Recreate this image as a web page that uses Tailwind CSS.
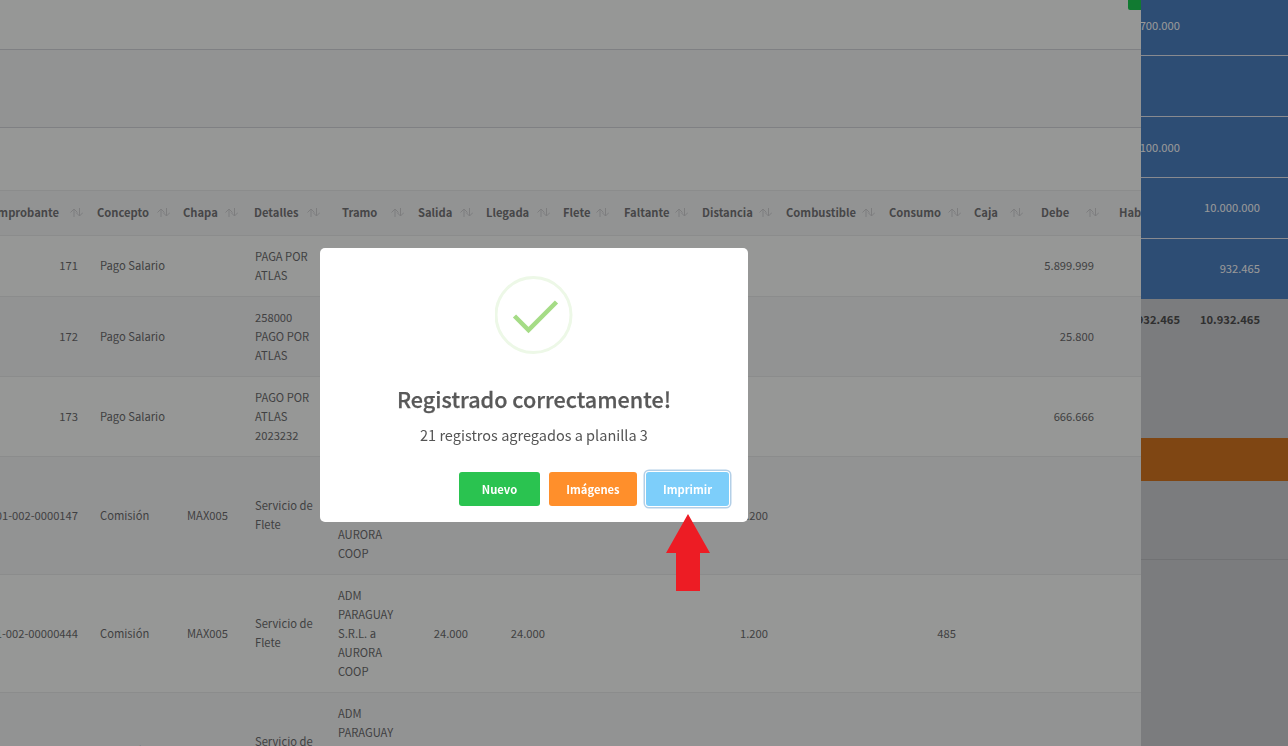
<!DOCTYPE html>
<html lang="es">
<head>
    <meta charset="UTF-8">
    <meta name="viewport" content="width=device-width, initial-scale=1.0">
    <title>Planilla</title>
    <script src="https://cdn.jsdelivr.net/npm/@tailwindcss/browser@4"></script>
</head>
<body class="h-screen overflow-hidden font-['Noto_Sans_CJK_SC','Noto_Sans',sans-serif] text-[11.2px] leading-[19px] text-[#6c6c6e]">
    <svg class="hidden">
        <symbol id="sort" viewBox="0 0 13 9">
            <path d="M4 9V1M.5 4.5L4 1L7.5 4.5M9.5 0V8M6 4.5L9.5 8L13 4.5" fill="none" stroke="currentColor" stroke-width="1"></path>
        </symbol>
    </svg>

    <div class="flex h-full">
        <!-- Tabla principal -->
        <div class="relative w-[1141px] shrink-0 overflow-hidden bg-[#f4f5f6]">
            <div class="absolute right-0 top-0 h-[10px] w-[13px] rounded-bl-[2px] bg-[#1dcb52]"></div>
            <div class="h-[50px] border-b border-[#d4d6da] bg-[#fafcfa]"></div>
            <div class="h-[78px] border-b border-[#d4d6da] bg-[#f4f5f6]"></div>
            <div class="h-[63px] border-b border-[#e8e9ea] bg-[#fafcfa]"></div>

            <table class="ml-[-27px] w-[1207px] table-fixed border-collapse">
                <colgroup>
                    <col class="w-[115px]"><col class="w-[89px]"><col class="w-[68px]"><col class="w-[83px]">
                    <col class="w-[80px]"><col class="w-[70px]"><col class="w-[77px]"><col class="w-[60px]">
                    <col class="w-[78px]"><col class="w-[85px]"><col class="w-[102px]"><col class="w-[86px]">
                    <col class="w-[65px]"><col class="w-[73px]"><col class="w-[76px]">
                </colgroup>
                <thead>
                    <tr class="h-[44px] border-b border-[#e8e9ea] bg-[#f4f5f6] text-left text-[#767678]">
                        <th class="pl-[10px] pr-[5px] font-bold"><div class="flex items-center justify-between">Comprobante<svg class="h-[9px] w-[13px] text-[#d0d1d3]"><use href="#sort"></use></svg></div></th>
                        <th class="pl-[9px] pr-[7px] font-bold"><div class="flex items-center justify-between">Concepto<svg class="h-[9px] w-[13px] text-[#d0d1d3]"><use href="#sort"></use></svg></div></th>
                        <th class="pl-[6px] pr-[7px] font-bold"><div class="flex items-center justify-between">Chapa<svg class="h-[9px] w-[13px] text-[#d0d1d3]"><use href="#sort"></use></svg></div></th>
                        <th class="pl-[9px] pr-[8px] font-bold"><div class="flex items-center justify-between">Detalles<svg class="h-[9px] w-[13px] text-[#d0d1d3]"><use href="#sort"></use></svg></div></th>
                        <th class="pl-[14px] pr-[4px] font-bold"><div class="flex items-center justify-between">Tramo<svg class="h-[9px] w-[13px] text-[#d0d1d3]"><use href="#sort"></use></svg></div></th>
                        <th class="pl-[10px] pr-[5px] font-bold"><div class="flex items-center justify-between">Salida<svg class="h-[9px] w-[13px] text-[#d0d1d3]"><use href="#sort"></use></svg></div></th>
                        <th class="pl-[8px] pr-[5px] font-bold"><div class="flex items-center justify-between">Llegada<svg class="h-[9px] w-[13px] text-[#d0d1d3]"><use href="#sort"></use></svg></div></th>
                        <th class="pl-[8px] pr-[6px] font-bold"><div class="flex items-center justify-between">Flete<svg class="h-[9px] w-[13px] text-[#d0d1d3]"><use href="#sort"></use></svg></div></th>
                        <th class="pl-[9px] pr-[5px] font-bold"><div class="flex items-center justify-between">Faltante<svg class="h-[9px] w-[13px] text-[#d0d1d3]"><use href="#sort"></use></svg></div></th>
                        <th class="pl-[9px] pr-[6px] font-bold"><div class="flex items-center justify-between">Distancia<svg class="h-[9px] w-[13px] text-[#d0d1d3]"><use href="#sort"></use></svg></div></th>
                        <th class="pl-[8px] pr-[5px] font-bold"><div class="flex items-center justify-between">Combustible<svg class="h-[9px] w-[13px] text-[#d0d1d3]"><use href="#sort"></use></svg></div></th>
                        <th class="pl-[9px] pr-[5px] font-bold"><div class="flex items-center justify-between">Consumo<svg class="h-[9px] w-[13px] text-[#d0d1d3]"><use href="#sort"></use></svg></div></th>
                        <th class="pl-[8px] pr-[8px] font-bold"><div class="flex items-center justify-between">Caja<svg class="h-[9px] w-[13px] text-[#d0d1d3]"><use href="#sort"></use></svg></div></th>
                        <th class="pl-[10px] pr-[5px] font-bold"><div class="flex items-center justify-between">Debe<svg class="h-[9px] w-[13px] text-[#d0d1d3]"><use href="#sort"></use></svg></div></th>
                        <th class="pl-[15px] font-bold"><div class="flex items-center justify-between">Haber</div></th>
                    </tr>
                </thead>
                <tbody class="[&_td]:py-[11px]">
                    <tr class="border-b border-[#e8e9ea] bg-[#fafcfa]">
                        <td class="pr-[10px] text-right">171</td>
                        <td class="pl-[12px]">Pago Salario</td><td></td>
                        <td class="pl-[10px] pr-[10px]">PAGA POR ATLAS</td>
                        <td></td><td></td><td></td><td></td><td></td><td></td><td></td><td></td><td></td>
                        <td class="pr-[10px] text-right">5.899.999</td><td></td>
                    </tr>
                    <tr class="border-b border-[#e8e9ea] bg-[#f4f5f6]">
                        <td class="pr-[10px] text-right">172</td>
                        <td class="pl-[12px]">Pago Salario</td><td></td>
                        <td class="pl-[10px] pr-[10px]">258000 PAGO POR ATLAS</td>
                        <td></td><td></td><td></td><td></td><td></td><td></td><td></td><td></td><td></td>
                        <td class="pr-[10px] text-right">25.800</td><td></td>
                    </tr>
                    <tr class="border-b border-[#e8e9ea] bg-[#fafcfa]">
                        <td class="pr-[10px] text-right">173</td>
                        <td class="pl-[12px]">Pago Salario</td><td></td>
                        <td class="pl-[10px] pr-[10px]">PAGO POR ATLAS 2023232</td>
                        <td></td><td></td><td></td><td></td><td></td><td></td><td></td><td></td><td></td>
                        <td class="pr-[10px] text-right">666.666</td><td></td>
                    </tr>
                    <tr class="border-b border-[#e8e9ea] bg-[#f4f5f6]">
                        <td class="whitespace-nowrap pr-[10px] text-right">001-002-0000147</td>
                        <td class="pl-[12px]">Comisión</td>
                        <td class="pl-[10px]">MAX005</td>
                        <td class="pl-[10px] pr-[10px]">Servicio de Flete</td>
                        <td class="pl-[10px] pr-[5px]">ADM PARAGUAY S.R.L. a AURORA COOP</td>
                        <td class="pr-[10px] text-right">24.000</td>
                        <td class="pr-[10px] text-right">24.000</td>
                        <td></td><td></td>
                        <td class="pr-[10px] text-right">1.200</td>
                        <td></td><td></td><td></td><td></td><td></td>
                    </tr>
                    <tr class="border-b border-[#e8e9ea] bg-[#fafcfa]">
                        <td class="whitespace-nowrap pr-[10px] text-right">001-002-00000444</td>
                        <td class="pl-[12px]">Comisión</td>
                        <td class="pl-[10px]">MAX005</td>
                        <td class="pl-[10px] pr-[10px]">Servicio de Flete</td>
                        <td class="pl-[10px] pr-[5px]">ADM PARAGUAY S.R.L. a AURORA COOP</td>
                        <td class="pr-[10px] text-right">24.000</td>
                        <td class="pr-[10px] text-right">24.000</td>
                        <td></td><td></td>
                        <td class="pr-[10px] text-right">1.200</td>
                        <td></td>
                        <td class="pr-[10px] text-right">485</td>
                        <td></td><td></td><td></td>
                    </tr>
                    <tr class="border-b border-[#e8e9ea] bg-[#f4f5f6]">
                        <td class="whitespace-nowrap pr-[10px] text-right">001-002-00000445</td>
                        <td class="pl-[12px]">Comisión</td>
                        <td class="pl-[10px]">MAX005</td>
                        <td class="pl-[10px] pr-[10px]">Servicio de Flete</td>
                        <td class="pl-[10px] pr-[5px]">ADM PARAGUAY S.R.L. a AURORA COOP</td>
                        <td class="pr-[10px] text-right">24.000</td>
                        <td class="pr-[10px] text-right">24.000</td>
                        <td></td><td></td><td></td><td></td><td></td><td></td><td></td><td></td>
                    </tr>
                </tbody>
            </table>
        </div>

        <!-- Resumen lateral -->
        <div class="min-w-0 flex-1 overflow-hidden bg-[#cdcfd2]">
            <div class="-mt-[5px] bg-[#4b80c1] text-white">
                <div class="grid h-[61px] grid-cols-[39px_1fr] items-center border-b border-[#e3e6f0] pr-[28px]">
                    <div class="flex justify-end whitespace-nowrap">700.000</div><div></div>
                </div>
                <div class="h-[61px] border-b border-[#e3e6f0]"></div>
                <div class="grid h-[61px] grid-cols-[39px_1fr] items-center border-b border-[#e3e6f0] pr-[28px]">
                    <div class="flex justify-end whitespace-nowrap">100.000</div><div></div>
                </div>
                <div class="grid h-[61px] grid-cols-[39px_1fr] items-center border-b border-[#e3e6f0] pb-[2px] pr-[28px]">
                    <div></div><div class="text-right">10.000.000</div>
                </div>
                <div class="grid h-[60px] grid-cols-[39px_1fr] items-center pb-[2px] pr-[28px]">
                    <div></div><div class="text-right">932.465</div>
                </div>
            </div>
            <div class="grid h-[42px] grid-cols-[39px_1fr] items-center pb-[2px] pr-[28px] font-bold text-[#505050]">
                <div class="flex justify-end whitespace-nowrap">10.932.465</div><div class="text-right">10.932.465</div>
            </div>
            <div class="mt-[97px] h-[43px] bg-[#d47620]"></div>
            <div class="h-[79px] border-b border-[#bdbec1]"></div>
        </div>
    </div>

    <!-- Modal -->
    <div class="fixed inset-0 bg-black/40 pl-[320px] pt-[248px]">
        <div class="flex h-[274px] w-[428px] flex-col items-center rounded-[5px] bg-white pt-[28px]">
            <svg class="h-[78px] w-[78px] shrink-0" viewBox="0 0 78 78">
                <circle cx="38.5" cy="39" r="37.5" fill="none" stroke="#edf8e7" stroke-width="3"></circle>
                <path d="M19.5 40L33.5 54L61.5 26" fill="none" stroke="#a5dc86" stroke-width="4.5"></path>
            </svg>
            <h2 class="mt-[29px] text-[21.6px] font-medium leading-[32px] text-[#595959] [-webkit-text-stroke:0.25px_#595959]">Registrado correctamente!</h2>
            <p class="mt-[9px] text-[14.5px] leading-[21px] text-[#545454]">21 registros agregados a planilla 3</p>
            <div class="mt-[27px] flex w-full justify-end gap-[9px] pr-[19px]">
                <button class="h-[34px] w-[81px] rounded-[3px] bg-[#2ac350] text-[11.2px] font-bold leading-[19px] text-white">Nuevo</button>
                <button class="h-[34px] w-[88px] rounded-[3px] bg-[#ff8f2b] text-[11.2px] font-bold leading-[19px] text-white">Imágenes</button>
                <button class="h-[34px] w-[83px] rounded-[3px] bg-[#7dcefa] text-[11.2px] font-bold leading-[19px] text-white shadow-[0_0_0_1px_white,0_0_0_2.5px_rgba(160,195,225,0.8)]">Imprimir</button>
            </div>
        </div>
        <svg class="absolute left-[666px] top-[514px] h-[78px] w-[44px]" viewBox="0 0 44 78">
            <path d="M22 0L44 39H34V77H10V39H0Z" fill="#ed1c24"></path>
        </svg>
    </div>
</body>
</html>
